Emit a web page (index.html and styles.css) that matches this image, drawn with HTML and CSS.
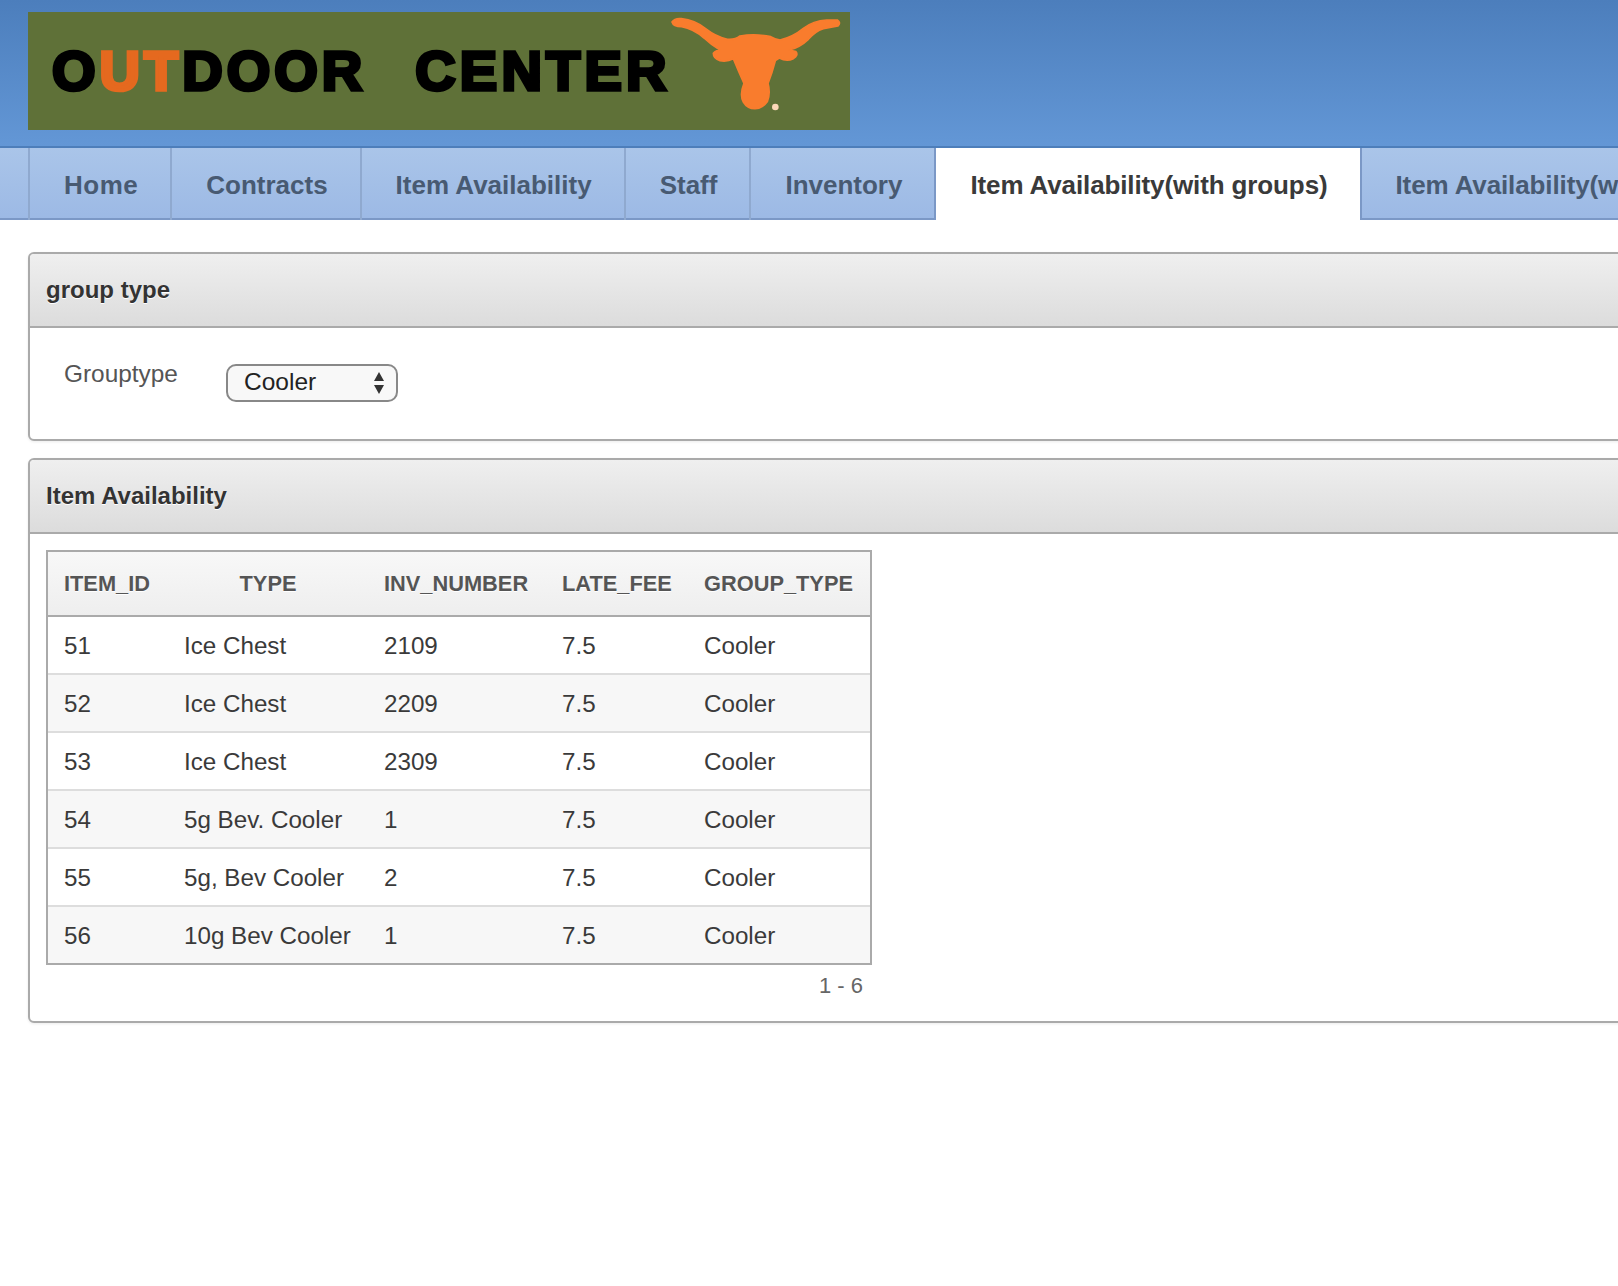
FILE: index.html
```html
<!DOCTYPE html>
<html lang="en">
<head>
<meta charset="utf-8">
<title>Outdoor Center</title>
<link rel="stylesheet" href="styles.css">
</head>
<body>
<div class="page">
  <header class="site-header">
    <div class="logo">
      <div class="logo-text">
        <span class="word"><span class="orange-gap">O</span><span class="orange">UT</span>DOOR</span>
        <span class="word word-2">CENTER</span>
      </div>
      <svg class="bull" viewBox="0 36 630 354" width="210" height="118" aria-hidden="true">
        <path class="bull-shape" d="M96 66 Q104 54 124 56 Q165 60 200 88 Q225 108 262 118 Q285 120 300 108 Q345 100 392 110 Q405 118 420 120 Q460 110 490 85 Q520 62 560 60 L592 60 Q604 68 594 78 L550 86 Q525 94 505 118 Q480 142 448 150 L468 155 Q476 165 460 176 Q440 186 418 174 L406 182 Q396 220 384 250 Q392 280 382 305 Q370 324 345 326 Q322 326 310 306 Q298 285 312 250 Q296 215 280 176 Q262 186 240 182 Q220 176 220 160 Q228 150 240 150 Q215 136 192 114 Q160 86 125 80 Q100 80 96 66 Z"/>
        <circle class="bull-dot" cx="406" cy="321" r="10"/>
      </svg>
    </div>
  </header>
  <nav class="tabs">
    <a class="tab tab-short">Home</a>
    <a class="tab">Contracts</a>
    <a class="tab">Item Availability</a>
    <a class="tab">Staff</a>
    <a class="tab">Inventory</a>
    <a class="tab tab-long active">Item Availability(with groups)</a>
    <a class="tab tab-long">Item Availability(with groups)</a>
  </nav>
  <main class="content">
    <section class="panel">
      <h2 class="panel-head">group type</h2>
      <div class="form-body">
        <label class="field-label" for="gt">Grouptype</label>
        <div class="select-wrap">
          <select id="gt" class="select"><option>Cooler</option></select>
          <svg class="select-arrows" viewBox="0 0 12 22" width="12" height="22" aria-hidden="true"><path d="M6 0 L11 9 H1 Z M1 13 H11 L6 22 Z"/></svg>
        </div>
      </div>
    </section>
    <section class="panel">
      <h2 class="panel-head">Item Availability</h2>
      <div class="table-body">
        <div class="table-wrap">
          <table class="grid">
            <thead>
              <tr><th>ITEM_ID</th><th>TYPE</th><th>INV_NUMBER</th><th>LATE_FEE</th><th>GROUP_TYPE</th></tr>
            </thead>
            <tbody>
              <tr><td>51</td><td>Ice Chest</td><td>2109</td><td>7.5</td><td>Cooler</td></tr>
              <tr><td>52</td><td>Ice Chest</td><td>2209</td><td>7.5</td><td>Cooler</td></tr>
              <tr><td>53</td><td>Ice Chest</td><td>2309</td><td>7.5</td><td>Cooler</td></tr>
              <tr><td>54</td><td>5g Bev. Cooler</td><td>1</td><td>7.5</td><td>Cooler</td></tr>
              <tr><td>55</td><td>5g, Bev Cooler</td><td>2</td><td>7.5</td><td>Cooler</td></tr>
              <tr><td>56</td><td>10g Bev Cooler</td><td>1</td><td>7.5</td><td>Cooler</td></tr>
            </tbody>
          </table>
          <div class="pager">1 - 6</div>
        </div>
      </div>
    </section>
  </main>
</div>
</body>
</html>
```
FILE: styles.css
```css
* { box-sizing: border-box; }
html, body { margin: 0; padding: 0; background: #fff; }
body { font-family: "Liberation Sans", Arial, sans-serif; color: #333; }
.page { width: 1618px; height: 1286px; overflow: hidden; }

.site-header {
  height: 148px;
  padding: 12px 0 0 28px;
  background: linear-gradient(#4c7ebc, #6397d6);
  border-bottom: 2px solid #4d7eba;
}
.logo {
  position: relative;
  width: 822px;
  height: 118px;
  background: #5f7138;
  display: flex;
  align-items: center;
  overflow: hidden;
}
.logo-text {
  display: flex;
  gap: 49px;
  padding-left: 24px;
  font-size: 56px;
  font-weight: 700;
  line-height: 1;
  color: #000;
  -webkit-text-stroke: 3.6px #000;
  filter: blur(0.4px);
  white-space: nowrap;
}
.word { letter-spacing: 4px; }
.word-2 { letter-spacing: 4.2px; }
.orange { color: #e5691f; -webkit-text-stroke-color: #e5691f; }
.bull { position: absolute; left: 612px; top: 0; }
.bull-shape { fill: #f97c2d; stroke: #f97c2d; stroke-width: 5px; stroke-linejoin: round; }
.bull-dot { fill: #fbd9b8; }

.tabs {
  display: flex;
  height: 72px;
  padding-left: 28px;
  background: linear-gradient(#aac5e9, #9cb9e5);
  box-shadow: inset 0 -2px 0 #7b98c6;
  white-space: nowrap;
  overflow: hidden;
}
.tab {
  flex: none;
  height: 72px;
  padding: 0 32px 0 34px;
  border-left: 2px solid #8fa9cf;
  font-size: 26px;
  font-weight: 700;
  line-height: 74px;
  color: #485a72;
}
.tab-short { letter-spacing: 0.5px; }
.tab-long { letter-spacing: -0.12px; }
.tab.active {
  background: #fff;
  color: #3a3a3a;
  border-left-color: #7b98c6;
}
.tab.active + .tab { border-left-color: #7b98c6; }

.content { padding: 32px 0 0 28px; }
.panel {
  width: 1700px;
  margin-bottom: 17px;
  border: 2px solid #aaa;
  border-radius: 6px;
  background: #fff;
  box-shadow: 0 1px 3px rgba(0, 0, 0, 0.08);
}
.panel-head {
  height: 74px;
  margin: 0;
  padding: 0 16px;
  background: linear-gradient(#efefef, #dcdcdc);
  border-bottom: 2px solid #aaa;
  border-radius: 4px 4px 0 0;
  font-size: 24px;
  font-weight: 700;
  line-height: 71px;
  color: #333;
  text-shadow: 0 1px 0 #fff;
}
.form-body {
  display: flex;
  align-items: flex-start;
  height: 111px;
  padding: 31px 0 0 34px;
}
.field-label {
  width: 162px;
  font-size: 24.4px;
  line-height: 30px;
  color: #555;
}
.select-wrap { position: relative; margin-top: 5px; }
.select {
  display: block;
  width: 172px;
  height: 38px;
  padding: 0 0 4px 16px;
  appearance: none;
  border: 2px solid #888;
  border-radius: 10px;
  background: #f8f8f8;
  font-family: "Liberation Sans", Arial, sans-serif;
  font-size: 24.5px;
  color: #222;
}
.select-arrows { position: absolute; right: 13px; top: 8px; fill: #333; }

.table-body { padding: 16px 0 0 16px; height: 487px; }
.table-wrap { width: 826px; }
.grid {
  width: 826px;
  table-layout: fixed;
  border-collapse: separate;
  border-spacing: 0;
  border: 2px solid #aaa;
  font-size: 24.2px;
}
.grid th {
  height: 65px;
  padding: 0 16px;
  background: linear-gradient(#f8f8f8, #eeeeee);
  border-bottom: 2px solid #aaa;
  font-size: 21.8px;
  font-weight: 700;
  color: #555;
  text-shadow: 0 1px 0 #fff;
  text-align: center;
  white-space: nowrap;
}
.grid th:nth-child(1) { width: 120px; text-align: left; }
.grid th:nth-child(2) { width: 200px; }
.grid th:nth-child(3) { width: 178px; text-align: left; }
.grid th:nth-child(4) { width: 142px; text-align: left; }
.grid th:nth-child(5) { text-align: left; }
.grid td {
  height: 58px;
  padding: 1px 16px 0;
  color: #3a3a3a;
  border-top: 2px solid #ddd;
  white-space: nowrap;
}
.grid tbody tr:first-child td { border-top: 0; height: 56px; }
.grid tbody tr:nth-child(even) td { background: #f7f7f7; }
.pager {
  padding: 7px 9px 0 0;
  font-size: 22px;
  line-height: 28px;
  text-align: right;
  color: #666;
}
```
